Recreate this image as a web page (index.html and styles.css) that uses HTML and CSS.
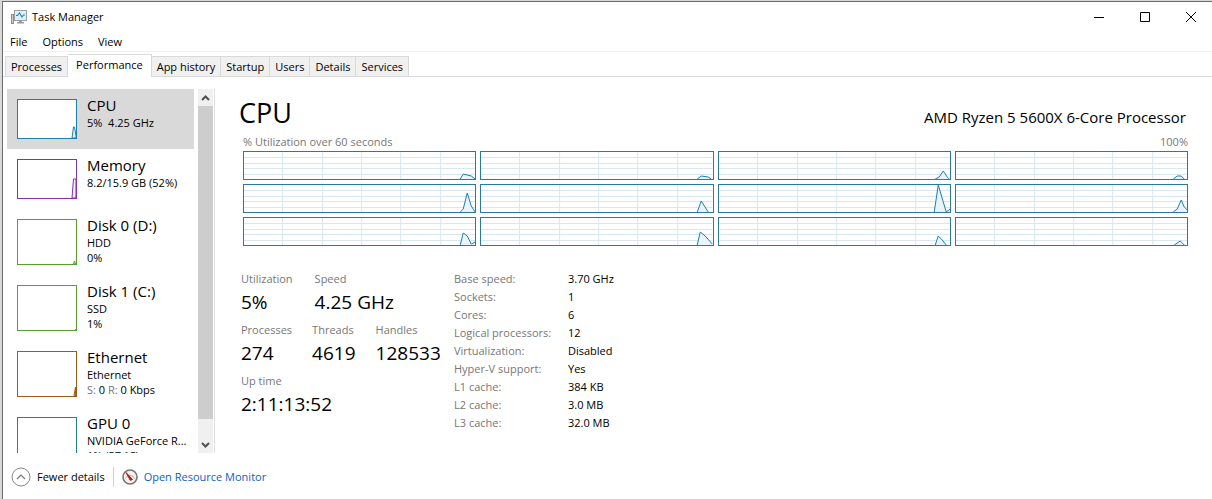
FILE: index.html
```
<!DOCTYPE html>
<html lang="en">
<head>
<meta charset="utf-8">
<title>Task Manager</title>
<link rel="stylesheet" href="styles.css">
</head>
<body>
<div class="window">
  <header class="titlebar">
    <svg class="app-icon" viewBox="0 0 16 14" aria-hidden="true">
      <rect x="0.5" y="4.5" width="2" height="9" fill="#c9cdd0" stroke="#8b8f92"/>
      <rect x="3.5" y="0.5" width="12" height="10" fill="#d9f1fa" stroke="#9a9ea1"/>
      <path d="M5 5.500h1.500l2-2.500 2.500 4 1.500-2H14" fill="none" stroke="#2585b5" stroke-width="1.100"/>
      <path d="M8 11h3v1h2v1.500H6V12h2z" fill="#969a9c"/>
    </svg>
    <h1 class="title">Task Manager</h1>
    <div class="controls">
      <button class="control" aria-label="Minimize"><svg viewBox="0 0 12 12"><path d="M1 6.500h10"/></svg></button>
      <button class="control" aria-label="Maximize"><svg viewBox="0 0 12 12"><path d="M1.500 1.500h9v9h-9z"/></svg></button>
      <button class="control" aria-label="Close"><svg viewBox="0 0 12 12"><path d="M1 1l10 10M11 1L1 11"/></svg></button>
    </div>
  </header>

  <nav class="menubar">
    <button>File</button>
    <button>Options</button>
    <button>View</button>
  </nav>

  <div class="tabs" role="tablist">
    <button class="tab" role="tab">Processes</button>
    <button class="tab active" role="tab" aria-selected="true">Performance</button>
    <button class="tab" role="tab">App history</button>
    <button class="tab" role="tab">Startup</button>
    <button class="tab" role="tab">Users</button>
    <button class="tab" role="tab">Details</button>
    <button class="tab" role="tab">Services</button>
  </div>

  <div class="body">
    <aside class="sidebar">
      <div class="list">
        <button class="item selected">
          <svg class="thumb cpu" viewBox="0 0 58 38"><path d="M54 38L55.500 27l1 0L58 36v2z"/></svg>
          <span class="info"><span class="name">CPU</span><span class="line">5%&nbsp; 4.25 GHz</span></span>
        </button>
        <button class="item">
          <svg class="thumb memory" viewBox="0 0 58 38"><path d="M54 38L55.500 19H58v19z"/></svg>
          <span class="info"><span class="name">Memory</span><span class="line">8.2/15.9 GB (52%)</span></span>
        </button>
        <button class="item">
          <svg class="thumb tall disk" viewBox="0 0 58 44"><path d="M55.500 44L56.500 41l1 3z"/></svg>
          <span class="info"><span class="name">Disk 0 (D:)</span><span class="line">HDD</span><span class="line">0%</span></span>
        </button>
        <button class="item">
          <svg class="thumb tall disk" viewBox="0 0 58 44"><path d="M57 44l1-1v1z"/></svg>
          <span class="info"><span class="name">Disk 1 (C:)</span><span class="line">SSD</span><span class="line">1%</span></span>
        </button>
        <button class="item">
          <svg class="thumb tall ethernet" viewBox="0 0 58 44"><path d="M56 44l1.500-9v9z"/></svg>
          <span class="info"><span class="name">Ethernet</span><span class="line">Ethernet</span><span class="line"><i>S:</i> 0 <i>R:</i> 0 Kbps</span></span>
        </button>
        <button class="item">
          <svg class="thumb tall gpu" viewBox="0 0 58 44"></svg>
          <span class="info"><span class="name">GPU 0</span><span class="line">NVIDIA GeForce R...</span><span class="line">1% (57 °C)</span></span>
        </button>
      </div>
      <div class="scrollbar">
        <button aria-label="Scroll up"><svg viewBox="0 0 9 6"><path d="M1 5l3.500-3.500L8 5"/></svg></button>
        <div class="track"><div class="handle"></div></div>
        <button aria-label="Scroll down"><svg viewBox="0 0 9 6"><path d="M1 1l3.500 3.500L8 1"/></svg></button>
      </div>
    </aside>

    <main class="detail">
      <div class="heading">
        <h2>CPU</h2>
        <p>AMD Ryzen 5 5600X 6-Core Processor</p>
      </div>
      <div class="caption"><span>% Utilization over 60 seconds</span><span>100%</span></div>
      <div class="charts" id="charts"></div>

      <div class="stats">
        <div class="live">
          <dl class="row wide">
            <div><dt>Utilization</dt><dd>5%</dd></div>
            <div><dt>Speed</dt><dd>4.25 GHz</dd></div>
          </dl>
          <dl class="row">
            <div><dt>Processes</dt><dd>274</dd></div>
            <div><dt>Threads</dt><dd>4619</dd></div>
            <div><dt>Handles</dt><dd>128533</dd></div>
          </dl>
          <dl class="row">
            <div><dt>Up time</dt><dd>2:11:13:52</dd></div>
          </dl>
        </div>
        <table class="specs">
          <tr><th scope="row">Base speed:</th><td>3.70 GHz</td></tr>
          <tr><th scope="row">Sockets:</th><td>1</td></tr>
          <tr><th scope="row">Cores:</th><td>6</td></tr>
          <tr><th scope="row">Logical processors:</th><td>12</td></tr>
          <tr><th scope="row">Virtualization:</th><td>Disabled</td></tr>
          <tr><th scope="row">Hyper-V support:</th><td>Yes</td></tr>
          <tr><th scope="row">L1 cache:</th><td>384 KB</td></tr>
          <tr><th scope="row">L2 cache:</th><td>3.0 MB</td></tr>
          <tr><th scope="row">L3 cache:</th><td>32.0 MB</td></tr>
        </table>
      </div>
    </main>
  </div>

  <footer class="footer">
    <button class="fewer">
      <svg viewBox="0 0 20 20" aria-hidden="true"><circle cx="10" cy="10" r="9" fill="#fff" stroke="#8a8a8a"/><path d="M6 12l4-4 4 4" fill="none" stroke="#777" stroke-width="1.200"/></svg>
      Fewer details
    </button>
    <a class="monitor" href="#">
      <svg viewBox="0 0 16 16" aria-hidden="true"><circle cx="8" cy="8" r="7" fill="#f4f1ee" stroke="#777" stroke-width="1.600"/><path d="M3.500 9.500a4.800 4.800 0 0 1 9 0" fill="none" stroke="#b5b5b5"/><path d="M4 3.500l6.500 7-2.200.8z" fill="#d01c1c" stroke="#b51212"/></svg>
      Open Resource Monitor
    </a>
  </footer>
</div>
<script src="charts.js"></script>
</body>
</html>
```

FILE: styles.css
```
* { box-sizing: border-box; }

body {
  margin: 0;
  padding: 1px 0 0 2px;
  min-height: 100vh;
  display: flex;
  background: #d9d9d9;
  color: #000;
  font: 11px/16px "Open Sans", "Noto Sans", sans-serif;
}

button {
  margin: 0;
  padding: 0;
  border: 0;
  background: none;
  color: inherit;
  font: inherit;
  text-align: left;
}

h1, h2, p, dl, dd { margin: 0; font-weight: 400; }

svg { display: block; flex: none; }

.window {
  flex: 1;
  min-width: 0;
  height: calc(100vh - 1px);
  display: flex;
  flex-direction: column;
  overflow: hidden;
  background: #fff;
  border-top: 1px solid #6b6b6b;
  border-left: 1px solid #6b6b6b;
}

.titlebar {
  height: 30px;
  padding-left: 8px;
  display: flex;
  align-items: center;
  gap: 5px;
}
.app-icon { width: 16px; height: 14px; }
.title { font-size: 11px; }
.controls { margin: 0 -2px 0 auto; display: flex; }
.control {
  width: 46px;
  height: 30px;
  display: grid;
  place-items: center;
}
.control svg {
  width: 12px;
  height: 12px;
  fill: none;
  stroke: #000;
}

.menubar {
  height: 20px;
  padding-left: 7px;
  display: flex;
  align-items: center;
  gap: 15px;
  border-bottom: 1px solid #f0f0f0;
}

.tabs {
  height: 25px;
  padding-left: 2px;
  display: flex;
  align-items: flex-end;
  border-bottom: 1px solid #d9d9d9;
}
.tab {
  height: 20px;
  padding: 0 5px;
  background: #f0f0f0;
  border: 1px solid #d9d9d9;
  border-width: 1px 1px 0 0;
}
.tab:first-child { border-left-width: 1px; }
.tab.active {
  height: 23px;
  padding: 0 8px 3px;
  margin-bottom: -1px;
  background: #fff;
}

.body {
  flex: 1;
  min-height: 0;
  display: flex;
  padding-top: 12px;
}

.sidebar {
  flex: none;
  width: 212px;
  padding-left: 4px;
  display: flex;
  gap: 4px;
  border-right: 1px solid #e0e0e0;
}
.list { width: 187px; overflow: hidden; }
.item {
  width: 100%;
  padding: 10px 0 10px 10px;
  display: flex;
  gap: 10px;
  white-space: nowrap;
}
.item.selected { background: #d9d9d9; }
.thumb {
  width: 60px;
  height: 40px;
  background: #fff;
  border: 1px solid;
  fill: #e9f2f8;
  stroke: currentColor;
}
.thumb.tall { height: 46px; }
.cpu { color: #1a7fb4; }
.memory { color: #8b2fa8; }
.disk { color: #57a02c; }
.ethernet { color: #a35a17; }
.gpu { color: #1f7f9c; }
.info {
  display: flex;
  flex-direction: column;
  margin: -4px 0;
}
.name { font-size: 15px; line-height: 20px; }
.line { line-height: 15px; }
.line i { font-style: normal; color: #777; }

.scrollbar {
  width: 15px;
  display: flex;
  flex-direction: column;
  background: #f0f0f0;
}
.scrollbar button {
  height: 17px;
  display: grid;
  place-items: center;
}
.scrollbar svg {
  width: 9px;
  height: 6px;
  fill: none;
  stroke: #505050;
  stroke-width: 2;
}
.track { flex: 1; padding-bottom: 17px; }
.handle { height: 100%; background: #cdcdcd; }

.detail {
  flex: 1;
  min-width: 0;
  padding: 6px 24px 0 28px;
}
.heading {
  margin-left: -4px;
  display: flex;
  justify-content: space-between;
  align-items: center;
}
.heading h2 { font-size: 27px; line-height: 36px; }
.heading p { padding: 8px 2px 0 0; font-size: 15px; line-height: 20px; }
.caption {
  padding-top: 3px;
  display: flex;
  justify-content: space-between;
  color: #777;
}
.charts {
  padding-top: 1px;
  display: grid;
  grid-template-columns: repeat(4, 1fr);
  gap: 4px;
}
.chart {
  width: 100%;
  height: 29px;
  border: 1px solid #2a7a9f;
  fill: none;
}
.chart path { vector-effect: non-scaling-stroke; }
.chart .grid { stroke: #d9e8f0; }
.chart .area { fill: #e9f3f9; }
.chart .curve { stroke: #1a7fb4; }

.stats {
  margin: 24px 0 0 -2px;
  display: flex;
}
.live { width: 213px; }
.row {
  height: 51px;
  display: flex;
  gap: 20px;
}
.wide { gap: 22px; }
dt, th { color: #777; }
dt { line-height: 18px; }
dd { font-size: 19px; line-height: 28px; }

.specs { border-collapse: collapse; }
.specs th, .specs td {
  padding: 0;
  font-size: 11px;
  font-weight: 400;
  line-height: 18px;
  text-align: left;
}
.specs th { width: 114px; }

.footer {
  height: 46px;
  padding: 2px 0 0 8px;
  display: flex;
  align-items: center;
}
.fewer, .monitor {
  display: flex;
  align-items: center;
  gap: 6px;
}
.fewer { padding-right: 8px; border-right: 1px solid #d0d0d0; }
.fewer svg { width: 20px; height: 20px; }
.monitor { padding-left: 8px; color: #0d62c0; text-decoration: none; }
.monitor svg { width: 16px; height: 16px; }
```

FILE: charts.js
```
// One utilization history per logical processor, in row order.
const histories = [
  "216,27 219,22 227,24 231,27",
  "216,27 220,24 227,25 230,27",
  "216,27 220,25 224,19 228,25 230,27",
  "217,27 221,24 225,24 228,27",
  "216,27 219,24 223,8 227,21 231,27",
  "216,27 220,16 227,27",
  "215,27 219,0 227,27 231,24",
  "217,27 221,24 225,15 228,22 231,25",
  "216,27 219,15 223,18 227,26 231,24",
  "216,27 219,14 224,18 231,26",
  "216,27 219,18 223,22 227,27",
  "218,27 224,23 228,27"
];

const gridPath =
  [5.5, 11.5, 16.5, 22.5].map(y => `M0 ${y}H231`).join("") +
  [38.5, 78.5, 117.5, 156.5, 196.5].map(x => `M${x} 0V27`).join("");

document.getElementById("charts").innerHTML = histories.map(points => `
  <svg class="chart" viewBox="0 0 231 27" preserveAspectRatio="none">
    <path class="grid" d="${gridPath}"/>
    <path class="area" d="M${points} 231,27z"/>
    <path class="curve" d="M${points}"/>
  </svg>`).join("");
```
